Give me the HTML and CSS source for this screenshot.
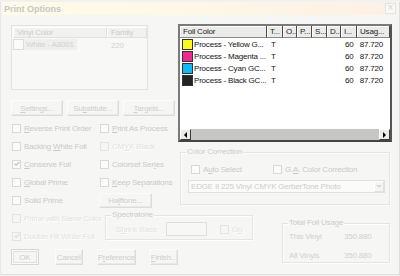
FILE: index.html
```html
<!DOCTYPE html>
<html lang="en">
<head>
  <meta charset="UTF-8">
  <title>Print Options</title>
  <link rel="stylesheet" href="styles.css">
</head>
<body>
  <div class="dialog">
    <div class="titlebar">
      <span class="title">Print Options</span>
      <span class="close">&times;</span>
    </div>

    <div class="content">
      <div class="left">
        <div class="vinyl-list">
          <div class="list-head">
            <span class="col-vinyl">Vinyl Color</span>
            <span class="col-family">Family</span>
          </div>
          <div class="vinyl-row">
            <span class="col-vinyl"><span class="sel"><span class="swatch blank"></span>White - A8001</span></span>
            <span class="col-family">220</span>
          </div>
        </div>

        <div class="btn-row">
          <button class="btn"><u>S</u>ettings...</button>
          <button class="btn">Su<u>b</u>stitute...</button>
          <button class="btn"><u>T</u>argets...</button>
        </div>

        <div class="checks">
          <label class="check"><span class="box"></span><span><u>R</u>everse Print Order</span></label>
          <label class="check"><span class="box"></span><span><u>P</u>rint As Process</span></label>
          <label class="check"><span class="box"></span><span>Backing <u>W</u>hite Foil</span></label>
          <label class="check off"><span class="box"></span><span>CM<u>Y</u>K Black</span></label>
          <label class="check"><span class="box"><svg viewBox="0 0 7 7"><polyline points="0.5,3 2.5,5 6.5,1" /></svg></span><span><u>C</u>onserve Foil</span></label>
          <label class="check"><span class="box"></span><span>Colorset Ser<u>i</u>es</span></label>
          <label class="check"><span class="box"></span><span><u>G</u>lobal Prime</span></label>
          <label class="check"><span class="box"></span><span><u>K</u>eep Separations</span></label>
          <label class="check"><span class="box"></span><span>Solid Prime</span></label>
          <div class="cell"><button class="btn halftone">Ha<u>l</u>ftone...</button></div>
          <label class="check off"><span class="box"></span><span>Prime with Same Color</span></label>
          <fieldset class="group spectra">
            <legend>Spectratone</legend>
            <div class="spectra-body">
              <span class="sb-label dim">S<u>h</u>rink Base</span>
              <span class="textbox"></span>
              <label class="check off on-check"><span class="box"></span><span>O<u>n</u></span></label>
            </div>
          </fieldset>
          <label class="check off"><span class="box"><svg viewBox="0 0 7 7"><polyline points="0.5,3 2.5,5 6.5,1" /></svg></span><span>Double Hit White Foil</span></label>
        </div>

        <div class="btn-row bottom">
          <button class="btn default">OK</button>
          <button class="btn">Cancel</button>
          <button class="btn">P<u>r</u>eference</button>
          <button class="btn"><u>F</u>inish...</button>
        </div>
      </div>

      <div class="right">
        <div class="foil-list">
          <div class="foil-head">
            <span>Foil Color</span><span>T...</span><span>O...</span><span>P...</span><span>S...</span><span>D...</span><span>I...</span><span>Usag...</span>
          </div>
          <div class="foil-rows">
            <div class="foil-row">
              <span class="name"><i class="swatch yellow"></i>Process - Yellow G...</span>
              <span class="t">T</span><span></span><span></span><span></span><span></span>
              <span class="i">60</span><span class="usage">87.720</span>
            </div>
            <div class="foil-row">
              <span class="name"><i class="swatch magenta"></i>Process - Magenta ...</span>
              <span class="t">T</span><span></span><span></span><span></span><span></span>
              <span class="i">60</span><span class="usage">87.720</span>
            </div>
            <div class="foil-row">
              <span class="name"><i class="swatch cyan"></i>Process - Cyan GC...</span>
              <span class="t">T</span><span></span><span></span><span></span><span></span>
              <span class="i">60</span><span class="usage">87.720</span>
            </div>
            <div class="foil-row">
              <span class="name"><i class="swatch black"></i>Process - Black GC...</span>
              <span class="t">T</span><span></span><span></span><span></span><span></span>
              <span class="i">60</span><span class="usage">87.720</span>
            </div>
          </div>
          <div class="hscroll">
            <span class="arrow left"></span>
            <span class="track"></span>
            <span class="arrow right"></span>
          </div>
        </div>

        <fieldset class="group color-corr">
          <legend>Color Correction</legend>
          <div class="cc-checks">
            <label class="check auto"><span class="box"></span><span>A<u>u</u>to Select</span></label>
            <label class="check"><span class="box"></span><span>G.<u>A</u>. Color Correction</span></label>
          </div>
          <div class="dropdown">
            <span class="dd-text">EDGE II 225 Vinyl CMYK GerberTone Photo</span>
            <span class="dd-btn"></span>
          </div>
        </fieldset>

        <fieldset class="group usage-box">
          <legend>Total Foil Usage</legend>
          <div class="usage-row first"><span class="usage-label">This Vinyl</span><span>350.880</span></div>
          <div class="usage-row"><span class="usage-label">All Vinyls</span><span>350.880</span></div>
        </fieldset>
      </div>
    </div>
  </div>
</body>
</html>
```

FILE: styles.css
```css
* {
  box-sizing: border-box;
}
body {
  margin: 0;
  width: 400px;
  height: 276px;
  background: #f1f1ef;
  font-family: "Liberation Sans", Arial, sans-serif;
  font-size: 8px;
  letter-spacing: -0.2px;
  color: #cbcbcb;
  overflow: hidden;
}
u {
  text-decoration-thickness: 1px;
}
.dialog {
  width: 400px;
  height: 273px;
  background: #f6f6f4;
  box-shadow: inset 1px 0 #e8e8e6, inset -1px -1px #dedede;
}
.titlebar {
  margin: 2px 3px 0;
  height: 13px;
  display: flex;
  align-items: center;
  justify-content: space-between;
  padding: 0 1px 0 1px;
  background: linear-gradient(to right, #fefbe8, #fdf7e8 55%, #fcf0e4);
}
.title {
  font-size: 9px;
  font-weight: bold;
  letter-spacing: 0;
  color: #c6c6c6;
}
.close {
  width: 11px;
  height: 11px;
  border: 1px solid #e4e4e4;
  background: #f8f8f7;
  color: #d6d6d6;
  font-size: 10px;
  line-height: 8px;
  text-align: center;
  letter-spacing: 0;
}
.content {
  display: flex;
  padding-left: 11px;
}
.left {
  width: 167px;
  display: flex;
  flex-direction: column;
}
.right {
  width: 214px;
  display: flex;
  flex-direction: column;
}

/* vinyl list */
.vinyl-list {
  margin-top: 10px;
  width: 137px;
  height: 65px;
  border: 1px solid #e2e2e0;
  background: #f8f8f7;
  padding: 1px 0 0 1px;
}
.list-head {
  display: flex;
  height: 11px;
}
.list-head span {
  background: #f1f1ef;
  border: 1px solid;
  border-color: #fff #e0e0de #e0e0de #fff;
  padding-left: 3px;
  line-height: 9px;
  color: #cdcdcd;
}
.col-vinyl {
  width: 94px;
}
.col-family {
  width: 40px;
}
.vinyl-row {
  display: flex;
  align-items: center;
  height: 12px;
  margin-top: 1px;
}
.vinyl-row .col-family {
  padding-left: 4px;
  color: #d2d2d2;
}
.sel {
  display: inline-flex;
  align-items: center;
  gap: 2px;
  width: 64px;
  height: 11px;
  background: #efefed;
  color: #d2d2d2;
}
.swatch {
  display: inline-block;
  width: 11px;
  height: 11px;
  border: 1px solid #333;
  flex-shrink: 0;
}
.swatch.blank {
  border-color: #dcdcdc;
  background: #fbfbfb;
}

/* buttons */
.btn-row {
  display: flex;
  gap: 4px;
  margin-top: 10px;
  height: 16px;
}
.btn {
  width: 52px;
  height: 16px;
  padding: 0;
  font-family: inherit;
  font-size: inherit;
  letter-spacing: inherit;
  color: #cecece;
  background: #f6f6f4;
  border: 1px solid;
  border-color: #fcfcfc #dcdcdc #dcdcdc #fcfcfc;
  box-shadow: inset -1px -1px #e9e9e7;
}
.btn.default {
  border-color: #d6d6d4;
  box-shadow: inset 0 0 0 1px #fbfbfb, inset 0 0 0 2px #e0e0de;
  margin-right: 2px;
}
.btn-row.bottom {
  gap: 14px;
  margin-top: 4px;
}
.halftone {
  width: 53px;
  height: 15px;
}

/* checkboxes */
.checks {
  display: grid;
  grid-template-columns: 88px 79px;
  grid-auto-rows: 18px;
  margin-top: 3px;
}
.check {
  display: flex;
  align-items: center;
  gap: 3px;
  padding-left: 1px;
  white-space: nowrap;
  color: #cacaca;
}
.box {
  width: 9px;
  height: 9px;
  flex-shrink: 0;
  border: 1px solid #d8d8d6;
  background: #fbfbfa;
  display: flex;
  align-items: center;
  justify-content: center;
}
.box svg {
  width: 6px;
  height: 6px;
  fill: none;
  stroke: #c4c4c4;
  stroke-width: 1.4;
}
.check.off {
  color: #e3e3e1;
  text-shadow: 1px 1px #fff;
}
.check.off .box {
  border-color: #e3e3e1;
  background: #f6f6f4;
}
.check.off .box svg {
  stroke: #dcdcdc;
}
.cell {
  display: flex;
  align-items: center;
}

/* group boxes */
.group {
  margin: 0;
  padding: 0;
  min-width: 0;
  border: 1px solid #e5e5e3;
  box-shadow: 1px 1px #fdfdfd, inset 1px 1px #fdfdfd;
}
.group legend {
  margin-left: 5px;
  padding: 0 1px;
  line-height: 10px;
  color: #cbcbcb;
}
.spectra {
  grid-row: span 2;
  align-self: start;
  margin: 1px 0 0 6px;
  width: 148px;
  height: 30px;
}
.spectra-body {
  display: flex;
  align-items: center;
  padding: 2px 0 0 10px;
}
.dim {
  color: #e3e3e1;
  text-shadow: 1px 1px #fff;
}
.sb-label {
  width: 50px;
}
.textbox {
  width: 41px;
  height: 14px;
  border: 1px solid #dedede;
  background: #f7f7f6;
}
.on-check {
  margin-left: 12px;
}

/* foil list */
.foil-list {
  margin-top: 9px;
  height: 118px;
  border: 2px solid;
  border-color: #7a7a7a #555 #444 #7a7a7a;
  background: #fff;
  display: flex;
  flex-direction: column;
}
.foil-head,
.foil-row {
  display: grid;
  grid-template-columns: 87px 16px 14px 15px 15px 14px 16px 33px;
}
.foil-head {
  height: 12px;
}
.foil-head span {
  background: #ebebe9;
  border-right: 1px solid #4a4a4a;
  border-bottom: 1px solid #8a8a8a;
  box-shadow: inset 1px 1px #fff;
  color: #1e1e1e;
  padding-left: 3px;
  line-height: 11px;
  white-space: nowrap;
  overflow: hidden;
}
.foil-rows {
  flex: 1;
}
.foil-row {
  height: 12px;
  align-items: center;
  color: #141414;
}
.foil-row .name {
  display: flex;
  align-items: center;
  gap: 1px;
  padding-left: 2px;
  white-space: nowrap;
}
.foil-row .t {
  padding-left: 4px;
}
.foil-row .i {
  padding-left: 4px;
}
.foil-row .usage {
  text-align: right;
  padding-right: 7px;
}
.yellow { background: #fafa1e; }
.magenta { background: #ee2a8e; }
.cyan { background: #14b9f1; }
.black { background: #202424; }

.hscroll {
  display: flex;
  height: 11px;
}
.arrow {
  width: 11px;
  background: #ebebe9;
  border: 1px solid;
  border-color: #fff #3a3a3a #3a3a3a #fff;
  display: flex;
  align-items: center;
  justify-content: center;
}
.arrow::after {
  content: "";
  border-top: 3px solid transparent;
  border-bottom: 3px solid transparent;
}
.arrow.left::after {
  border-right: 3px solid #000;
}
.arrow.right::after {
  border-left: 3px solid #000;
}
.track {
  flex: 1;
  background: #c6c6c4;
}

/* colour correction */
.color-corr {
  margin: 5px 0 0 2px;
  width: 210px;
  height: 58px;
}
.cc-checks {
  display: flex;
  height: 10px;
  padding: 0 0 0 10px;
  margin-top: 7px;
}
.cc-checks .check {
  padding-left: 0;
}
.cc-checks .auto {
  width: 82px;
}
.dropdown {
  margin: 6px 0 0 7px;
  width: 197px;
  height: 13px;
  border: 1px solid #e0e0de;
  background: #fbfbfa;
  display: flex;
  align-items: center;
}
.dd-text {
  flex: 1;
  padding-left: 2px;
  color: #cdcdcd;
  white-space: nowrap;
}
.dd-btn {
  width: 10px;
  height: 11px;
  background: #f4f4f2;
  border: 1px solid;
  border-color: #fff #e0e0de #e0e0de #fff;
  display: flex;
  align-items: center;
  justify-content: center;
}
.dd-btn::after {
  content: "";
  border-left: 3px solid transparent;
  border-right: 3px solid transparent;
  border-top: 3px solid #d8d8d8;
}

/* total usage */
.usage-box {
  margin: 13px 0 0 104px;
  width: 108px;
  height: 45px;
}
.usage-row {
  display: flex;
  padding-left: 6px;
  line-height: 10px;
  margin-top: 9px;
  color: #d0d0d0;
}
.usage-row.first {
  margin-top: 4px;
}
.usage-label {
  width: 55px;
}
```
